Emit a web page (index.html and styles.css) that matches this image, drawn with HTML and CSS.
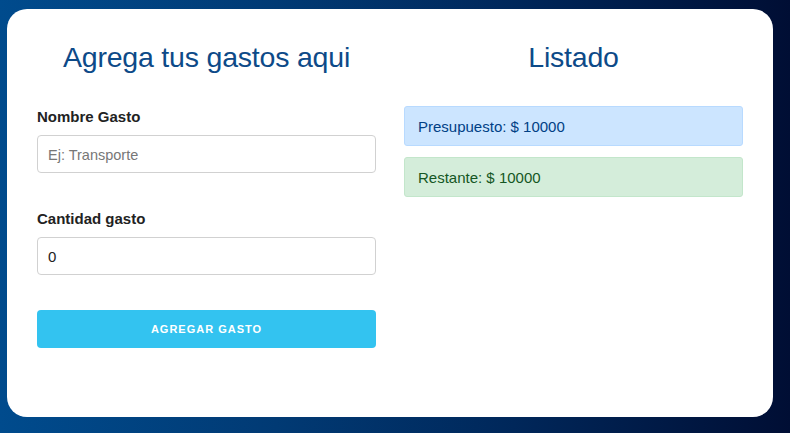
FILE: index.html
```html
<!DOCTYPE html>
<html lang="es">
<head>
<meta charset="utf-8">
<title>Gasto semanal</title>
<link rel="stylesheet" href="styles.css">
</head>
<body>
<main class="card">
  <section class="col">
    <h1 class="title">Agrega tus gastos aqui</h1>
    <form class="form">
      <div class="field">
        <label class="label" for="nombre">Nombre Gasto</label>
        <input class="input" id="nombre" type="text" placeholder="Ej: Transporte">
      </div>
      <div class="field">
        <label class="label" for="cantidad">Cantidad gasto</label>
        <input class="input" id="cantidad" type="number" value="0">
      </div>
      <button class="btn" type="button">Agregar Gasto</button>
    </form>
  </section>
  <section class="col">
    <h1 class="title">Listado</h1>
    <div class="alerts">
      <div class="alert alert-primary">Presupuesto: $ 10000</div>
      <div class="alert alert-success">Restante: $ 10000</div>
    </div>
  </section>
</main>
</body>
</html>
```
FILE: styles.css
```css
* { box-sizing: border-box; }
html, body { height: 100%; }
body {
  margin: 0;
  padding: 9px 17px 16px 7px;
  background: linear-gradient(90deg, #004b8d 0%, #013a74 35%, #00275a 65%, #000e34 100%);
  font-family: "Liberation Sans", Arial, sans-serif;
  color: #222;
}
.card {
  height: 408px;
  background: #fff;
  border-radius: 20px;
  padding: 29px 30px 30px;
  display: grid;
  grid-template-columns: 339px 339px;
  column-gap: 28px;
  align-items: start;
}
.title {
  margin: 0;
  font-size: 28.5px;
  line-height: 38px;
  font-weight: 400;
  color: #0d4a88;
  text-align: center;
  letter-spacing: -0.2px;
}
.form {
  margin-top: 32px;
  display: flex;
  flex-direction: column;
}
.field {
  display: flex;
  flex-direction: column;
  margin-bottom: 37px;
}
.field + .field { margin-bottom: 35px; }
.label {
  font-size: 15px;
  line-height: 18px;
  font-weight: 700;
  color: #222;
  margin-bottom: 9px;
}
.input {
  height: 38px;
  padding: 6px 10px;
  border: 1px solid #d1d1d1;
  border-radius: 4px;
  font-family: inherit;
  font-size: 15px;
  color: #222;
  background: #fff;
  outline: none;
  -moz-appearance: textfield;
}
.input::-webkit-outer-spin-button,
.input::-webkit-inner-spin-button { -webkit-appearance: none; margin: 0; }
.input::placeholder { color: #777; font-size: 14.5px; }
.btn {
  height: 38px;
  border: 0;
  border-radius: 4px;
  background: #33c3f0;
  color: #fff;
  font-family: inherit;
  font-size: 11px;
  font-weight: 700;
  letter-spacing: 1px;
  text-transform: uppercase;
}
.alerts {
  margin-top: 30px;
  display: flex;
  flex-direction: column;
  gap: 11px;
}
.alert {
  height: 40px;
  padding: 0 13px;
  display: flex;
  align-items: center;
  border: 1px solid;
  border-radius: 3px;
  font-size: 15px;
}
.alert-primary { background: #cce5ff; border-color: #b8daff; color: #004085; }
.alert-success { background: #d4edda; border-color: #c3e6cb; color: #155724; }
```
